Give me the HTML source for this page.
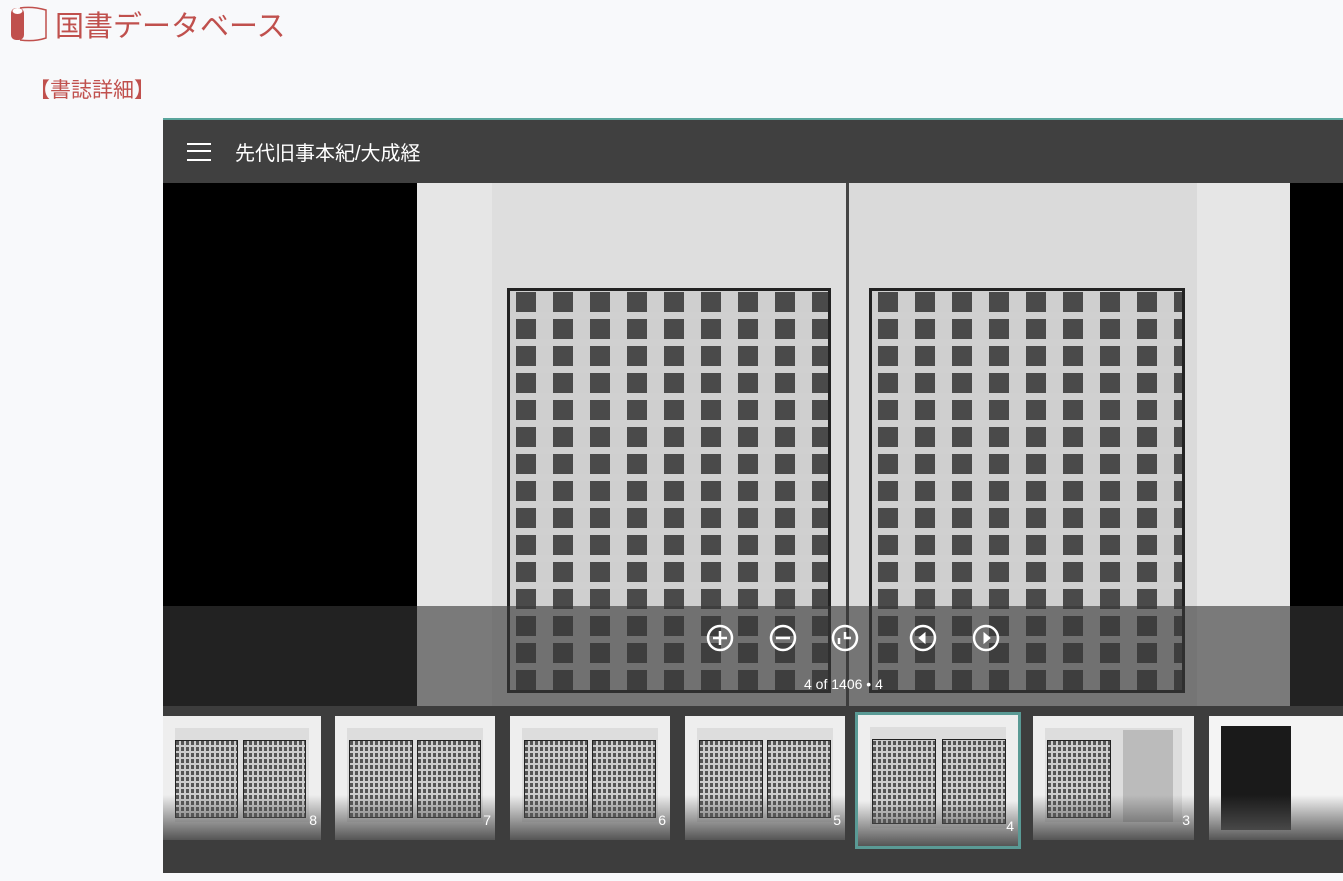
<!DOCTYPE html>
<html><head><meta charset="utf-8"><style>
*{margin:0;padding:0;box-sizing:border-box}
body{width:1343px;height:881px;background:#f8f9fb;font-family:"Liberation Sans","Noto Sans CJK JP",sans-serif;position:relative;overflow:hidden}
.logo{position:absolute;left:10px;top:4px;height:40px;display:flex;align-items:center}
.logo span{color:#c0504d;font-size:29px;margin-left:5px}
.sub{position:absolute;left:29px;top:74px;color:#c0504d;font-size:21px}
.viewer{position:absolute;left:163px;top:118px;width:1180px;height:753px;border-top:2px solid #5aa59c;background:#3e3e3e}
.hdr{height:63px;background:#404040;display:flex;align-items:center;color:#fff;font-size:20px}
.ham{width:24px;height:18px;margin:0 24px 0 24px;border-top:2.5px solid #fff;border-bottom:2.5px solid #fff;position:relative}
.ham:after{content:"";position:absolute;left:0;right:0;top:5.5px;border-top:2.5px solid #fff}
.stage{position:absolute;top:63px;left:0;width:1180px;height:523px;background:#000;overflow:hidden}
.page{position:absolute;left:254px;top:0;width:873px;height:523px;background:#e6e6e6}
.leaf{position:absolute;top:0;height:523px}
.block{position:absolute;top:105px;height:405px;border:3px solid #222;background:
repeating-linear-gradient(0deg,transparent 0 20px,#d0d0d0 20px 27px),
repeating-linear-gradient(90deg,#cfcfcf 0 6px,#4a4a4a 6px 26px,#cfcfcf 26px 37px)}
.ov{position:absolute;left:0;top:423px;width:1180px;height:100px;background:rgba(55,55,55,.62)}
.ic{position:absolute;top:440px}
.cnt{position:absolute;top:493px;left:641px;color:#fff;font-size:14px}
.thumb{position:absolute;top:596px;height:124px;background:#eee;overflow:hidden}
.thumb .in{position:absolute;left:12px;right:12px;top:12px;bottom:18px;background:#ddd}
.thumb .t{position:absolute;top:24px;bottom:22px;width:40%;background:
repeating-linear-gradient(0deg,transparent 0 4px,#ccc 4px 6px),
repeating-linear-gradient(90deg,#555 0 3px,#ccc 3px 5px);border:1px solid #222}
.thumb .g{position:absolute;left:0;right:0;bottom:0;height:45px;background:linear-gradient(#fff0,#555)}
.thumb b{position:absolute;right:4px;bottom:12px;color:#fff;font-weight:normal;font-size:14px}
</style></head><body>
<div class="logo"><svg width="40" height="40" viewBox="0 0 40 40"><rect x="1" y="4" width="13" height="32" rx="5" fill="#c0504d"/><ellipse cx="7.5" cy="7" rx="5" ry="3" fill="#fff"/><path d="M10 4 Q22 2 36 6 L36 34 Q24 38 10 36" fill="none" stroke="#c0504d" stroke-width="1.5"/></svg><span>国書データベース</span></div>
<div class="sub">【書誌詳細】</div>
<div class="viewer">
<div class="hdr"><div class="ham"></div>先代旧事本紀/大成経</div>
<div class="stage">
<div class="page">
<div class="leaf" style="left:75px;width:355px;background:#dedede"></div>
<div class="leaf" style="left:432px;width:348px;background:#dadada"></div>
<div style="position:absolute;left:429px;top:0;width:3px;height:523px;background:#444"></div>
<div class="block" style="left:90px;width:324px"></div>
<div class="block" style="left:452px;width:316px"></div>
</div>
<div class="ov"></div>
<svg class="ic" style="left:542px" width="30" height="30" viewBox="0 0 30 30" fill="none" stroke="#fff" stroke-width="2.5"><circle cx="15" cy="15" r="12"/><path d="M8 15h14M15 8v14"/></svg>
<svg class="ic" style="left:605px" width="30" height="30" viewBox="0 0 30 30" fill="none" stroke="#fff" stroke-width="2.5"><circle cx="15" cy="15" r="12"/><path d="M8 15h14"/></svg>
<svg class="ic" style="left:667px" width="30" height="30" viewBox="0 0 30 30" fill="none" stroke="#fff" stroke-width="2.5"><circle cx="15" cy="15" r="12"/><path d="M15 9v6h6M9 15v6"/></svg>
<svg class="ic" style="left:745px" width="30" height="30" viewBox="0 0 30 30" fill="none" stroke="#fff" stroke-width="2.5"><circle cx="15" cy="15" r="12"/><path d="M17 10v10l-6-5z" fill="#fff" stroke-width="1"/></svg>
<svg class="ic" style="left:808px" width="30" height="30" viewBox="0 0 30 30" fill="none" stroke="#fff" stroke-width="2.5"><circle cx="15" cy="15" r="12"/><path d="M13 10v10l6-5z" fill="#fff" stroke-width="1"/></svg>
<div class="cnt">4 of 1406 • 4</div>
</div>
<div style="position:absolute;left:0;top:586px;width:1180px;height:167px;background:#3d3d3d"></div>
<div class="thumb" style="left:0;width:158px"><div class="in"></div><div class="t" style="left:12px"></div><div class="t" style="left:80px"></div><div class="g"></div><b>8</b></div>
<div class="thumb" style="left:172px;width:160px"><div class="in"></div><div class="t" style="left:14px"></div><div class="t" style="left:82px"></div><div class="g"></div><b>7</b></div>
<div class="thumb" style="left:347px;width:160px"><div class="in"></div><div class="t" style="left:14px"></div><div class="t" style="left:82px"></div><div class="g"></div><b>6</b></div>
<div class="thumb" style="left:522px;width:160px"><div class="in"></div><div class="t" style="left:14px"></div><div class="t" style="left:82px"></div><div class="g"></div><b>5</b></div>
<div class="thumb" style="left:692px;width:166px;top:592px;height:137px;border:3px solid #5a9a95"><div class="in"></div><div class="t" style="left:14px"></div><div class="t" style="left:84px"></div><div class="g"></div><b>4</b></div>
<div class="thumb" style="left:870px;width:161px"><div class="in"></div><div class="t" style="left:14px"></div><div style="position:absolute;left:90px;top:14px;width:50px;height:92px;background:#bbb"></div><div class="g"></div><b>3</b></div>
<div class="thumb" style="left:1046px;width:134px;background:#f4f4f4"><div style="position:absolute;left:12px;top:10px;width:70px;height:104px;background:#1a1a1a"></div><div class="g"></div></div>
</div>
</body></html>
